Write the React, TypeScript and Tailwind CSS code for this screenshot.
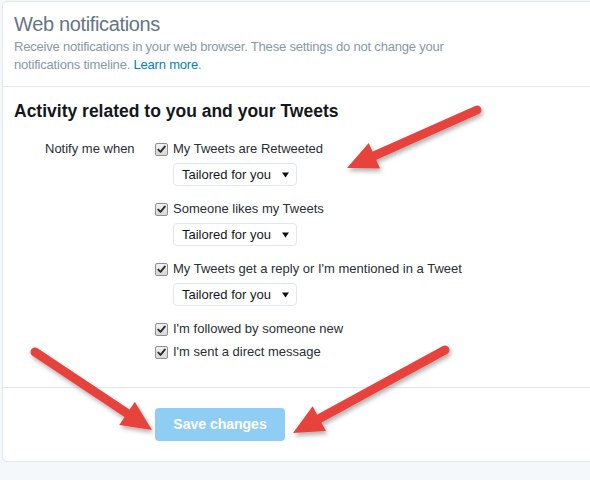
import React from "react";

function Check() {
  return (
    <span className="flex h-[13px] w-[13px] shrink-0 items-center justify-center rounded-[2px] border border-[#8e8f8f] bg-gradient-to-b from-[#f2f2f2] to-[#d8d8d8]">
      <svg width="9" height="9" viewBox="0 0 9 9">
        <path d="M1.3 4.6 L3.5 6.9 L7.8 1.6" fill="none" stroke="#2b2b2b" strokeWidth="1.9" strokeLinecap="round" strokeLinejoin="round" />
      </svg>
    </span>
  );
}

function CheckRow({ label }: { label: string }) {
  return (
    <div className="flex h-[18px] items-center gap-[5px]">
      <Check />
      <span className="text-[13px] leading-[18px] text-[#292f33]">{label}</span>
    </div>
  );
}

function Select() {
  return (
    <div className="ml-[18px] mt-[5px] flex h-[23px] w-[124px] items-center justify-between rounded-[4px] border border-[#e1e8ed] bg-white pl-[8px] pr-[7px]">
      <span className="text-[13px] leading-[18px] text-[#14171a]">Tailored for you</span>
      <svg width="7" height="6" viewBox="0 0 7 6">
        <path d="M0 0.5 H7 L3.5 5.5 Z" fill="#111" />
      </svg>
    </div>
  );
}

function Arrow({ tail, tip }: { tail: [number, number]; tip: [number, number] }) {
  const dx = tip[0] - tail[0];
  const dy = tip[1] - tail[1];
  const len = Math.hypot(dx, dy);
  const ux = dx / len;
  const uy = dy / len;
  const hl = 30;
  const hw = 14;
  const bx = tip[0] - hl * ux;
  const by = tip[1] - hl * uy;
  const px = -uy;
  const py = ux;
  const c1 = `${bx + px * hw},${by + py * hw}`;
  const c2 = `${bx - px * hw},${by - py * hw}`;
  return (
    <g filter="url(#sh)">
      <line x1={tail[0]} y1={tail[1]} x2={bx + ux * 4} y2={by + uy * 4} stroke="#e8433d" strokeWidth="9" strokeLinecap="round" />
      <polygon points={`${tip[0]},${tip[1]} ${c1} ${c2}`} fill="#e8433d" />
    </g>
  );
}

export default function App() {
  return (
    <div className="relative h-[480px] w-[590px] overflow-hidden bg-[#f5f8fa] font-['Liberation_Sans',Arial,sans-serif]">
      <div className="ml-[2px] mt-[1px] w-[620px] rounded-[5px] border border-[#e1e8ed] bg-white">
        <div className="border-b border-[#e1e8ed] px-[11px] pb-[12px] pt-[10px]">
          <h1 className="text-[20px] leading-[24px] tracking-[-0.35px] text-[#66757f]">Web notifications</h1>
          <p className="mt-[2px] text-[13px] leading-[18px] tracking-[-0.2px] text-[#8899a6]">
            Receive notifications in your web browser. These settings do not change your
            <br />
            notifications timeline. <span className="text-[#0084b4]">Learn more</span>.
          </p>
        </div>
        <div className="px-[11px] pb-[26px] pt-[13px]">
          <h2 className="text-[17.5px] font-bold leading-[22px] text-[#14171a]">Activity related to you and your Tweets</h2>
          <div className="mt-[18px] flex">
            <div className="w-[141px] pl-[31px] text-[13px] leading-[18px] text-[#292f33]">Notify me when</div>
            <div className="flex flex-col">
              <div>
                <CheckRow label="My Tweets are Retweeted" />
                <Select />
              </div>
              <div className="mt-[14px]">
                <CheckRow label="Someone likes my Tweets" />
                <Select />
              </div>
              <div className="mt-[14px]">
                <CheckRow label="My Tweets get a reply or I'm mentioned in a Tweet" />
                <Select />
              </div>
              <div className="mt-[14px]">
                <CheckRow label="I'm followed by someone new" />
              </div>
              <div className="mt-[5px]">
                <CheckRow label="I'm sent a direct message" />
              </div>
            </div>
          </div>
        </div>
        <div className="border-t border-[#e1e8ed] pb-[20px] pl-[152px] pt-[20px]">
          <button className="h-[33px] w-[130px] rounded-[4px] bg-[#8fcdf5] text-[14px] font-bold text-white">
            Save changes
          </button>
        </div>
      </div>
      <svg className="pointer-events-none absolute left-0 top-0" width="590" height="480">
        <defs>
          <filter id="sh" x="-20%" y="-20%" width="140%" height="140%">
            <feDropShadow dx="1.5" dy="3" stdDeviation="2" floodColor="#000" floodOpacity="0.3" />
          </filter>
        </defs>
        <Arrow tail={[477, 110]} tip={[347, 168]} />
        <Arrow tail={[35, 352]} tip={[152, 430]} />
        <Arrow tail={[445, 350]} tip={[293, 433]} />
      </svg>
    </div>
  );
}
